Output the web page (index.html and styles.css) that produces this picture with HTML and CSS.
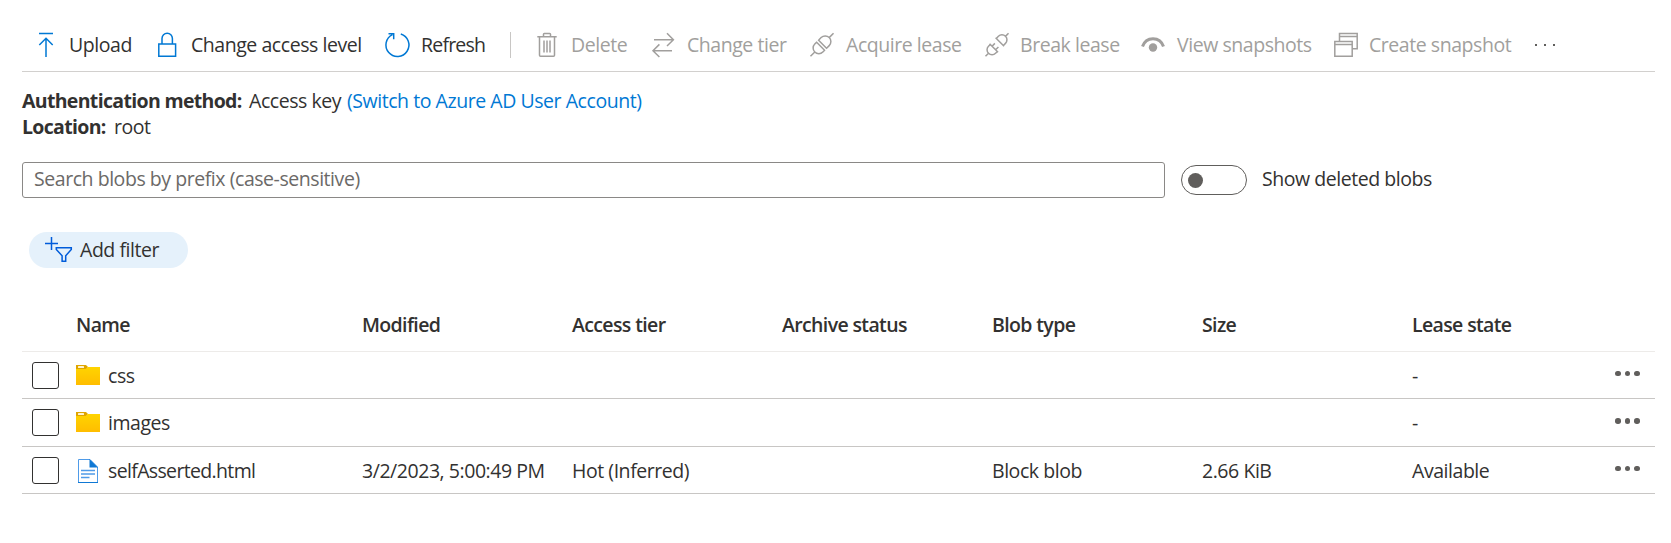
FILE: index.html
```html
<!DOCTYPE html>
<html lang="en">
<head>
<meta charset="utf-8">
<title>Container blobs</title>
<link rel="stylesheet" href="styles.css">
</head>
<body>
<main class="page">
  <nav class="toolbar">
    <button class="cmd cmd-upload"><svg class="icon" viewBox="0 0 26 26"><path d="M1 1.500h14M8 25V6.300M1.300 13L8 6.300l6.700 6.700"/></svg><span>Upload</span></button>
    <button class="cmd cmd-access"><svg class="icon" viewBox="0 0 26 26"><path d="M.8 12h16.800v12.200H.8zM4 12V6.500a5.200 5.200 0 0 1 10.400 0V12"/></svg><span>Change access level</span></button>
    <button class="cmd cmd-refresh"><svg class="icon" viewBox="0 0 26 26"><path d="M15.800 2A11.500 11.500 0 1 1 7.500 2.600M3.500 1.700h5.200v5.500"/></svg><span>Refresh</span></button>
    <i class="divider"></i>
    <button class="cmd cmd-delete off"><svg class="icon" viewBox="0 0 26 26"><path d="M.3 4.700h19.400M2.500 4.700v18.500q0 1 1 1h13q1 0 1-1V4.700M6.500 4.500V2.300q0-.8.8-.8h5.400q.8 0 .8.800v2.200M7 8.500v12M10 8.500v12M13 8.500v12"/></svg><span>Delete</span></button>
    <button class="cmd cmd-tier off"><svg class="icon" viewBox="0 0 26 26"><path d="M2 7.700h19M15 1.300l6.400 6.400L15 14M20 18.700H1M7.400 12.400L1 18.700 7.400 25"/></svg><span>Change tier</span></button>
    <button class="cmd cmd-acquire off"><svg class="icon" viewBox="0 0 26 26"><g transform="translate(12 12.800) rotate(-45)"><path d="M-16.300 0h5.800M10.500 0h5.800M-2-6.300v12.600M-2-5.700h-2.500a5.700 5.700 0 0 0 0 11.400H-2M.8-6.300v12.600M.8-5.700H4.500a5.700 5.700 0 0 1 0 11.400H.8"/></g></svg><span>Acquire lease</span></button>
    <button class="cmd cmd-break off"><svg class="icon" viewBox="0 0 26 26"><g transform="translate(12 12.800) rotate(-45)"><path d="M-16.300 0h4M12.300 0h4M-4.500-6v12M-4.500-5h-2.500a5 5 0 0 0 0 10h2.500M-4.500-2.500h4M-4.500 2.500h4M4-6v12M4-5h3a5 5 0 0 1 0 10H4"/></g></svg><span>Break lease</span></button>
    <button class="cmd cmd-view off"><svg class="icon" viewBox="0 0 26 26"><path class="thick" d="M1.500 14.500C5 4 19 4 22.500 14.500"/><circle class="solid" cx="12" cy="15.500" r="4.200"/></svg><span>View snapshots</span></button>
    <button class="cmd cmd-create off"><svg class="icon" viewBox="0 0 26 26"><path d="M.8 9.500h17.400v14.700H.8zM.8 12.500h17.400M5.500 9V1.500h17.700v15.200h-4.500M5.500 4.500h17.700"/></svg><span>Create snapshot</span></button>
    <button class="more"><i></i><i></i><i></i></button>
  </nav>

  <section class="info">
    <p><b class="auth">Authentication method:</b><span class="key">Access key</span><a class="switch">(Switch to Azure AD User Account)</a></p>
    <p><b class="loc">Location:</b><span>root</span></p>
  </section>

  <section class="search-row">
    <div class="search"><span>Search blobs by prefix (case-sensitive)</span></div>
    <div class="toggle"><i></i></div>
    <span class="toggle-label">Show deleted blobs</span>
  </section>

  <button class="filter"><svg class="filter-icon" viewBox="0 0 28 26"><path d="M6.500 0v13M0 6.500h13M11.300 10.800h15v1.600l-5.600 6.300v5.500h-3.600v-5.500l-5.800-6.300z"/></svg><span>Add filter</span></button>

  <section class="table">
    <div class="row head">
      <i></i><span>Name</span><span>Modified</span><span>Access tier</span><span>Archive status</span><span>Blob type</span><span>Size</span><span>Lease state</span><i></i>
    </div>
    <div class="row">
      <i class="check"></i>
      <span class="name"><svg class="file" viewBox="0 0 24 24"><defs><linearGradient id="fold" x2="0" y2="1"><stop stop-color="#ffd400"/><stop offset="1" stop-color="#ffbd00"/></linearGradient></defs><path fill="#dfa500" d="M0 1h10l2 2-2 3H0z"/><path fill="url(#fold)" d="M0 5h9.500L12 3h12v18H0z"/><rect x="2" y="2" width="6" height="2" rx=".5" fill="#fff3cf"/></svg><span>css</span></span>
      <span></span><span></span><span></span><span></span><span></span><span>-</span>
      <span class="dots"><i></i><i></i><i></i></span>
    </div>
    <div class="row row-mid">
      <i class="check"></i>
      <span class="name"><svg class="file" viewBox="0 0 24 24"><path fill="#dfa500" d="M0 1h10l2 2-2 3H0z"/><path fill="url(#fold)" d="M0 5h9.500L12 3h12v18H0z"/><rect x="2" y="2" width="6" height="2" rx=".5" fill="#fff3cf"/></svg><span>images</span></span>
      <span></span><span></span><span></span><span></span><span></span><span>-</span>
      <span class="dots"><i></i><i></i><i></i></span>
    </div>
    <div class="row">
      <i class="check"></i>
      <span class="name"><svg class="file" viewBox="0 0 24 24"><path d="M2.500.5H14l7.500 7.500v15.500h-19z" fill="#fff" stroke="#4f9be8"/><path d="M13.500 0L22 8.500h-8.500z" fill="#0f78d4"/><path d="M2 23.500h20" stroke="#0f78d4"/><path d="M5 11.500h14M5 15h14M5 18.500h8.500" stroke="#4f9be8" stroke-width="1.500"/></svg><span class="n-self">selfAsserted.html</span></span>
      <span>3/2/2023, 5:00:49 PM</span><span>Hot (Inferred)</span><span></span><span>Block blob</span><span>2.66 KiB</span><span>Available</span>
      <span class="dots"><i></i><i></i><i></i></span>
    </div>
  </section>
</main>
</body>
</html>
```
FILE: styles.css
```css
* { box-sizing: border-box; }
body { margin: 0; background: #fff; color: #323130; font: 370 19.5px/26px "Open Sans", "Noto Sans", sans-serif; letter-spacing: -0.45px; }
button { border: 0; background: none; padding: 0; margin: 0; font: inherit; letter-spacing: inherit; color: inherit; text-align: left; }
p { margin: 0; }
span, b, a { white-space: nowrap; }
.page { height: 543px; padding: 18px 16px 0 22px; overflow: hidden; }

.toolbar { display: flex; align-items: center; height: 54px; border-bottom: 1px solid #d2d0ce; padding-left: 16px; }
.cmd { display: grid; align-items: center; height: 26px; flex: none; }
.icon { width: 26px; height: 26px; fill: none; stroke: #0078d4; stroke-width: 1.500; overflow: visible; }
.off { color: #a19f9d; }
.off .icon { stroke: #a19f9d; }
.icon .thick { stroke-width: 3; }
.off .icon .solid { fill: #a19f9d; stroke: none; }
.cmd-upload { width: 120px; grid-template-columns: 31px 1fr; }
.cmd-access { width: 227px; grid-template-columns: 33px 1fr; }
.cmd-refresh { width: 125px; grid-template-columns: 36px 1fr; letter-spacing: -0.8px; }
.divider { width: 1px; height: 26px; background: #c8c6c4; margin-right: 26px; }
.cmd-delete { width: 115px; grid-template-columns: 34px 1fr; }
.cmd-tier { width: 158px; grid-template-columns: 35px 1fr; }
.cmd-acquire { width: 175px; grid-template-columns: 36px 1fr; }
.cmd-break { width: 156px; grid-template-columns: 35px 1fr; }
.cmd-view { width: 193px; grid-template-columns: 36px 1fr; }
.cmd-create { width: 201px; grid-template-columns: 35px 1fr; }
.more { display: flex; gap: 7px; }
.more i { width: 2px; height: 2px; background: #605e5c; }

.info { padding-top: 16px; }
.info p { display: flex; height: 26px; }
.info b { letter-spacing: -0.67px; }
.auth { width: 227px; }
.loc { width: 92px; }
.key { width: 98px; }
.switch { color: #0078d4; }

.search-row { display: flex; align-items: center; margin-top: 22px; height: 36px; }
.search { width: 1143px; height: 36px; border: 1px solid #8a8886; border-radius: 3px; padding: 3px 11px; color: #6b6967; margin-right: 16px; }
.toggle { width: 66px; height: 30px; border: 1px solid #605e5c; border-radius: 15px; display: flex; align-items: center; padding-left: 6px; margin-right: 15px; }
.toggle i { width: 15px; height: 15px; border-radius: 50%; background: #605e5c; }
.toggle-label { padding-bottom: 2px; }

.filter { display: flex; align-items: center; margin: 34px 0 0 7px; width: 159px; height: 36px; border-radius: 18px; background: #e5f1fb; padding-left: 16px; }
.filter-icon { width: 28px; height: 26px; margin-right: 7px; fill: none; stroke: #015cda; stroke-width: 1.500; }

.table { margin-top: 32px; }
.row { display: grid; grid-template-columns: 54px 286px 210px 210px 210px 210px 210px 203px 1fr; align-items: center; height: 47px; border-bottom: 1px solid #c8c6c4; width: 1633px; }
.row > span { padding-top: 2px; }
.row-mid { height: 48px; }
.row-mid > span { padding-top: 1px; }
.row.head { height: 52px; border-bottom-color: #edebe9; font-weight: 600; letter-spacing: -0.63px; }
.row.head > span { padding: 0 0 2px; }
.check { width: 27px; height: 27px; border: 1px solid #323130; border-radius: 3px; margin-left: 10px; }
.name { display: flex; align-items: center; }
.file { width: 24px; height: 24px; margin-right: 8px; fill: none; }
.n-self { letter-spacing: -0.65px; }
.row > .dots { display: flex; gap: 4px; padding: 0 0 3px; }
.dots i { width: 5.500px; height: 5.500px; border-radius: 50%; background: #605e5c; }
```
